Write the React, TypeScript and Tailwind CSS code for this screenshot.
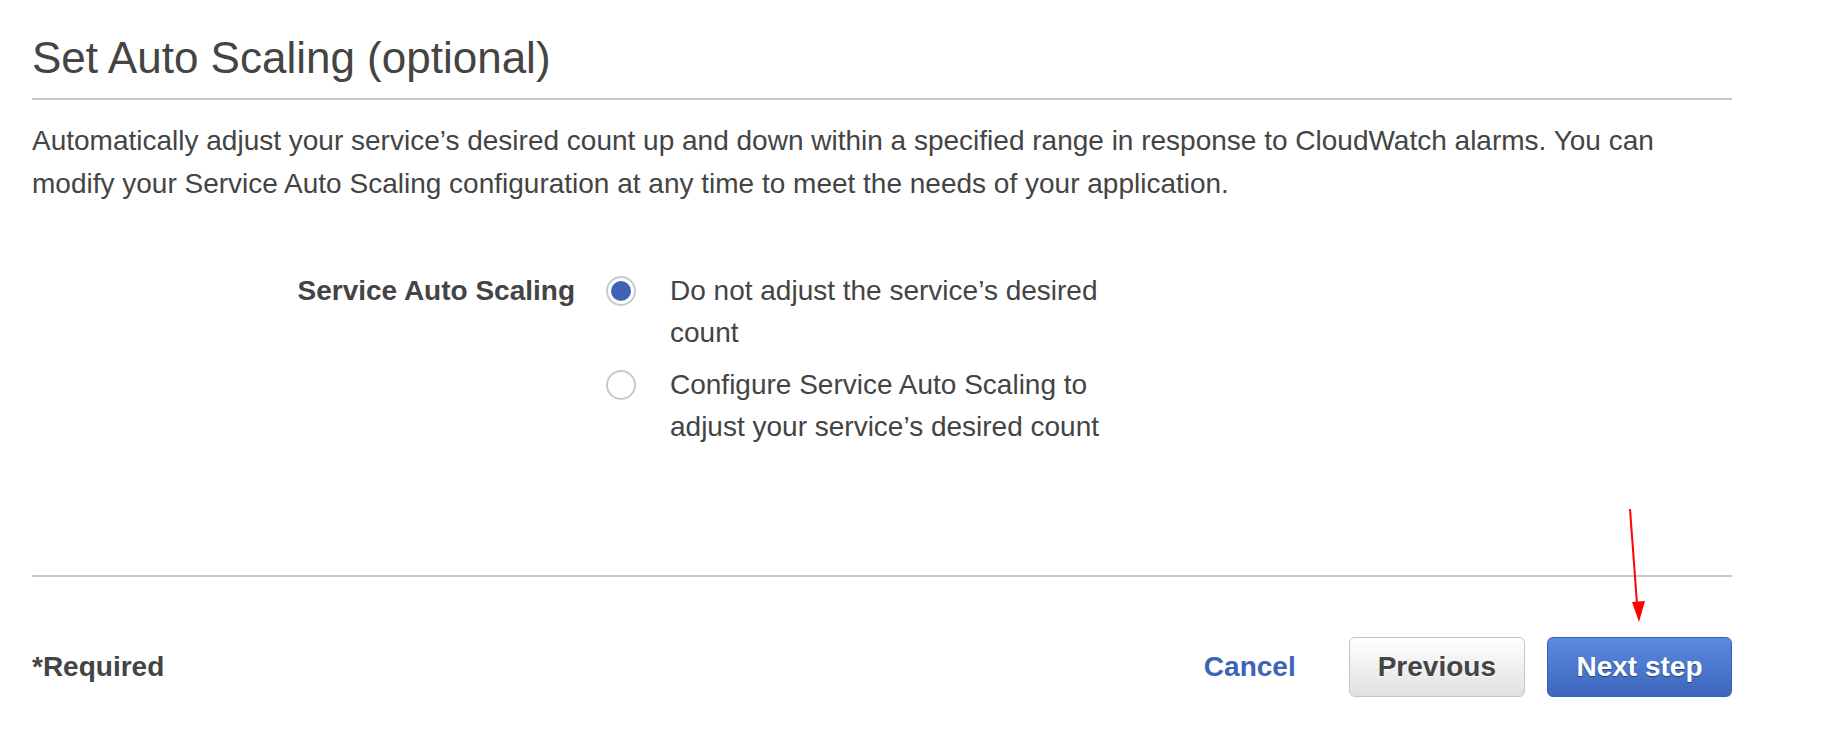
import React, { useState } from 'react';

const options = [
  { id: 'none', label: 'Do not adjust the service’s desired count' },
  { id: 'configure', label: 'Configure Service Auto Scaling to adjust your service’s desired count' },
];

const Radio: React.FC<{ checked: boolean }> = ({ checked }) => (
  <span className="flex h-[30px] w-[30px] shrink-0 items-center justify-center rounded-full border-2 border-[#c9c9c9] bg-white">
    {checked && <span className="h-[20px] w-[20px] rounded-full bg-[#3f64b5]" />}
  </span>
);

const App: React.FC = () => {
  const [selected, setSelected] = useState('none');

  return (
    <div className="relative h-[756px] w-[1821px] overflow-hidden bg-white font-['Liberation_Sans',Arial,sans-serif] text-[#444]">
      <div className="ml-8 w-[1700px] pt-[34px]">
        {/* Title */}
        <h1 className="border-b-2 border-[#c8c8c8] pb-[16px] text-[44px] leading-[48px] font-normal">
          Set Auto Scaling (optional)
        </h1>
        <p className="mt-[19px] text-[28px] leading-[43px]">
          Automatically adjust your service’s desired count up and down within a specified range in response to
          CloudWatch alarms. You can modify your Service Auto Scaling configuration at any time to meet the needs of
          your application.
        </p>

        {/* Form row */}
        <div className="mt-[65px] flex">
          <div className="w-[543px] text-right text-[28px] leading-[42px] font-bold">Service Auto Scaling</div>
          <div className="ml-[31px] flex flex-col gap-[10px]">
            {options.map((opt) => (
              <label
                key={opt.id}
                className="flex cursor-pointer items-start"
                onClick={() => setSelected(opt.id)}
              >
                <span className="mt-[6px]">
                  <Radio checked={selected === opt.id} />
                </span>
                <span className="ml-[34px] w-[460px] text-[28px] leading-[42px]">{opt.label}</span>
              </label>
            ))}
          </div>
        </div>

        {/* Footer */}
        <div className="mt-[127px] border-t-2 border-[#c8c8c8] pt-[60px]">
          <div className="flex items-center justify-between">
            <span className="text-[28px] font-bold">*Required</span>
            <div className="flex items-center">
              <button className="text-[28px] font-bold text-[#3d64b6]">Cancel</button>
              <button className="ml-[53px] h-[60px] rounded-[6px] border border-[#c6c6c6] bg-gradient-to-b from-[#ffffff] to-[#e1e1e1] px-[28px] text-[28px] font-bold text-[#444] [text-shadow:0_1px_0_#fff]">
                Previous
              </button>
              <button className="ml-[22px] h-[60px] rounded-[6px] border border-[#3a5fae] bg-gradient-to-b from-[#5b8ae0] to-[#3d66bc] px-[28.5px] text-[28px] font-bold text-white [text-shadow:0_1px_1px_rgba(0,0,0,0.45)]">
                Next step
              </button>
            </div>
          </div>
        </div>
      </div>

      {/* Annotation arrow */}
      <svg className="pointer-events-none absolute left-0 top-0" width="1821" height="756">
        <line x1="1630" y1="509" x2="1637" y2="604" stroke="#ff0000" strokeWidth="2" />
        <polygon points="1632,602 1645,601 1639,622" fill="#ff0000" />
      </svg>
    </div>
  );
};

export default App;
